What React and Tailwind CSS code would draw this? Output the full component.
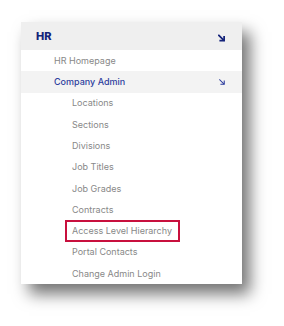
import React from "react";

function Arrow({ w = 7, h = 7, stroke = 1.8 }) {
  return (
    <svg width={w} height={h} viewBox="0 0 8 8" fill="none" stroke="currentColor" strokeWidth={stroke} strokeLinecap="square" className="block">
      <path d="M1 1 L6.3 6.3" />
      <path d="M7 2.6 V7 H2.6" />
    </svg>
  );
}

const items = [
  "Locations",
  "Sections",
  "Divisions",
  "Job Titles",
  "Job Grades",
  "Contracts",
  "Access Level Hierarchy",
  "Portal Contacts",
  "Change Admin Login",
];

export default function App() {
  return (
    <div className="w-[284px] h-[326px] bg-white pt-[22px] pl-[21px]" style={{ fontFamily: "Inter, 'Liberation Sans', sans-serif" }}>
      <div className="w-[221px] bg-white shadow-[8px_10px_15px_rgba(0,0,0,0.55)]">
        <div className="h-[28px] bg-[#efefef] flex items-center justify-between pl-[15px] pr-[17px]">
          <span className="text-[11px] leading-none font-extrabold text-[#14237a]">HR</span>
          <span className="text-[#14237a] mt-[3px]"><Arrow w={7} h={8} stroke={2} /></span>
        </div>
        <div className="h-[21px] flex items-center pl-[33px] text-[9px] text-[#888888]">HR Homepage</div>
        <div className="h-[21.5px] bg-[#f3f3f3] flex items-center justify-between pl-[33px] pr-[17px]">
          <span className="text-[9px] font-medium text-[#2d3d9e]">Company Admin</span>
          <span className="text-[#2d3d9e] mt-[1px]"><Arrow w={6} h={6} stroke={1.4} /></span>
        </div>
        <div className="flex flex-col">
          {items.map((t) => (
            <div key={t} className="h-[21.3px] flex items-center pl-[44px]">
              {t === "Access Level Hierarchy" ? (
                <span className="border-2 border-[#c8103e] h-[22px] flex items-center pl-[5px] pr-[6px] text-[9px] text-[#888888]">{t}</span>
              ) : (
                <span className="pl-[7px] text-[9px] text-[#888888]">{t}</span>
              )}
            </div>
          ))}
        </div>
      </div>
    </div>
  );
}
